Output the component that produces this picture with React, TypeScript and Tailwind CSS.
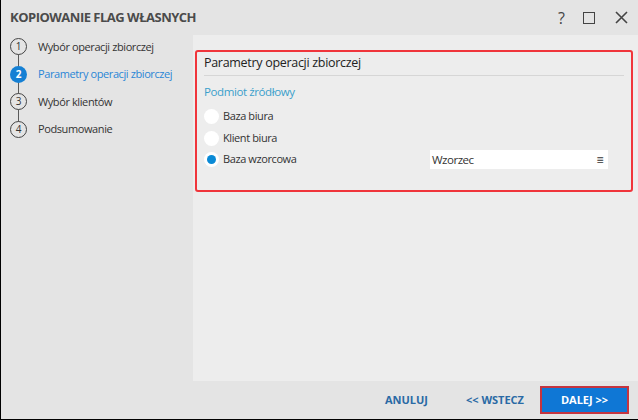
import React from 'react'

const steps = [
  { n: 1, label: 'Wybór operacji zbiorczej' },
  { n: 2, label: 'Parametry operacji zbiorczej', active: true },
  { n: 3, label: 'Wybór klientów' },
  { n: 4, label: 'Podsumowanie' },
]

const options = [
  { label: 'Baza biura' },
  { label: 'Klient biura' },
  { label: 'Baza wzorcowa', checked: true },
]

const Radio = ({ checked }: { checked?: boolean }) => (
  <span className="flex h-[15px] w-[15px] items-center justify-center rounded-full bg-white">
    {checked && <span className="h-[9px] w-[9px] rounded-full bg-[#0a8ad6]" />}
  </span>
)

export default function App() {
  return (
    <div
      className="flex h-[420px] w-[638px] flex-col border-b border-l border-black bg-[#e4e4e4] text-[#333]"
      style={{ fontFamily: '"Open Sans", "Noto Sans", sans-serif' }}
    >
      {/* title bar */}
      <div className="flex h-[35px] shrink-0 items-center justify-between pl-[9px] pr-[10px]">
        <div className="text-[13px] font-bold tracking-[-0.5px] text-[#4b4b4b]">KOPIOWANIE FLAG WŁASNYCH</div>
        <div className="flex items-center text-[#444]">
          <span className="mr-[18px] text-[16px] leading-none">?</span>
          <span className="mr-[20px] h-[12px] w-[12px] border-[1.5px] border-[#444]" />
          <svg width="13" height="13" viewBox="0 0 13 13">
            <path d="M1 1 L12 12 M12 1 L1 12" stroke="#444" strokeWidth="1.6" />
          </svg>
        </div>
      </div>

      <div className="flex flex-1">
        {/* steps */}
        <div className="-mt-[2px] w-[192px] shrink-0 pl-[9px]">
          {steps.map((s, i) => (
            <div key={s.n} className="relative flex h-[27.5px] items-center">
              {i < steps.length - 1 && (
                <span className="absolute left-[8px] top-[20px] h-[15px] w-px bg-[#5a5a5a]" />
              )}
              <span
                className={
                  'relative flex h-[17px] w-[17px] items-center justify-center rounded-full text-[10px] ' +
                  (s.active
                    ? 'bg-[#1580d4] font-bold text-white'
                    : 'border border-[#444] bg-[#e4e4e4] text-[#333]')
                }
              >
                {s.n}
              </span>
              <span
                className={
                  'ml-[11px] text-[11px] tracking-[-0.4px] ' + (s.active ? 'text-[#2a86d6]' : 'text-[#333]')
                }
              >
                {s.label}
              </span>
            </div>
          ))}
        </div>

        {/* content */}
        <div className="flex-1 bg-[#ededed] pb-[10px] pl-[2px] pr-[5px] pt-[15px]">
          <div className="h-[142px] rounded-[3px] border-2 border-[#f0353b] px-[7px] pt-[2px]">
            <div className="border-b border-[#d6d6d6] pb-[2px] text-[12.5px] tracking-[-0.3px] text-[#222]">
              Parametry operacji zbiorczej
            </div>
            <div className="mt-[7px] text-[11.5px] tracking-[-0.4px] text-[#3a9fcb]">Podmiot źródłowy</div>
            <div className="mt-[9px] flex flex-col gap-[6.5px]">
              {options.map((o) => (
                <div key={o.label} className="flex h-[15px] items-center">
                  <Radio checked={o.checked} />
                  <span className="ml-[4px] w-[207px] text-[11px] tracking-[-0.4px] text-[#333]">{o.label}</span>
                  {o.checked && (
                    <div className="flex h-[19px] w-[178px] items-center justify-between bg-white pl-[2px] pr-[5px] text-[11.5px] tracking-[-0.5px] text-[#333]">
                      <span>Wzorzec</span>
                      <span className="text-[12px] leading-none">≡</span>
                    </div>
                  )}
                </div>
              ))}
            </div>
          </div>
        </div>
      </div>

      {/* footer */}
      <div className="flex h-[38px] shrink-0 items-center justify-end pr-[9px]">
        <button className="mr-[38px] text-[11px] font-bold text-[#2a6aa5]">ANULUJ</button>
        <button className="mr-[16px] text-[11px] font-bold text-[#2a6aa5]">{'<< WSTECZ'}</button>
        <button className="flex h-[28px] w-[89px] items-center justify-center border-2 border-[#c5343f] bg-[#0f77d5] text-[11px] font-bold text-white">
          {'DALEJ >>'}
        </button>
      </div>
    </div>
  )
}
